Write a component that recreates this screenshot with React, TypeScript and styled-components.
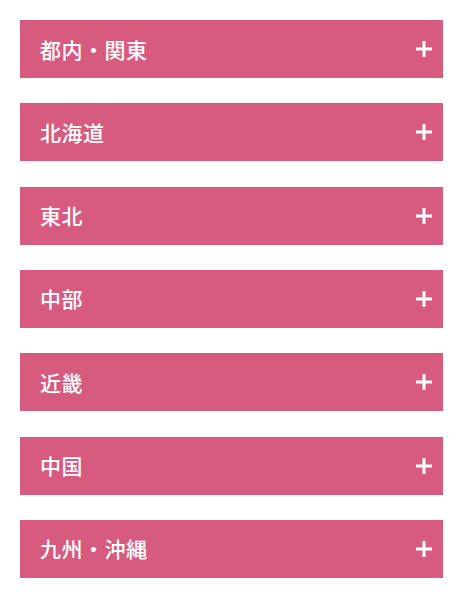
import React from "react";
import styled, { createGlobalStyle } from "styled-components";

const GlobalStyle = createGlobalStyle`
  html, body {
    margin: 0;
    padding: 0;
    background: #ffffff;
  }
  body {
    font-family: "Noto Sans CJK JP", "Noto Sans", sans-serif;
  }
`;

const regions = ["都内・関東", "北海道", "東北", "中部", "近畿", "中国", "九州・沖縄"];

function Accordion() {
  return (
    <List>
      {regions.map((name) => (
        <Item key={name}>
          <Header type="button">
            <Title>{name}</Title>
            <Plus aria-hidden="true" />
          </Header>
        </Item>
      ))}
    </List>
  );
}

export default function App() {
  return (
    <>
      <GlobalStyle />
      <Page>
        <Accordion />
      </Page>
    </>
  );
}

const Page = styled.div`
  padding: 20px 21px 20px 20px;
`;

const List = styled.ul`
  list-style: none;
  margin: 0;
  padding: 0;
  display: flex;
  flex-direction: column;
  gap: 25.33px;
`;

const Item = styled.li`
  margin: 0;
`;

const Header = styled.button`
  width: 100%;
  height: 58px;
  border: none;
  margin: 0;
  padding: 0 11px 0 20px;
  background: #d65b7f;
  color: #ffffff;
  display: flex;
  align-items: center;
  justify-content: space-between;
  cursor: pointer;
  font-family: inherit;
`;

const Title = styled.span`
  font-size: 21px;
  font-weight: 500;
  letter-spacing: 0.5px;
  line-height: 1;
`;

const Plus = styled.span`
  position: relative;
  width: 16px;
  height: 16px;
  &::before,
  &::after {
    content: "";
    position: absolute;
    background: #ffffff;
  }
  &::before {
    left: 0;
    right: 0;
    top: 50%;
    height: 3px;
    transform: translateY(-50%);
  }
  &::after {
    top: 0;
    bottom: 0;
    left: 50%;
    width: 3px;
    transform: translateX(-50%);
  }
`;
